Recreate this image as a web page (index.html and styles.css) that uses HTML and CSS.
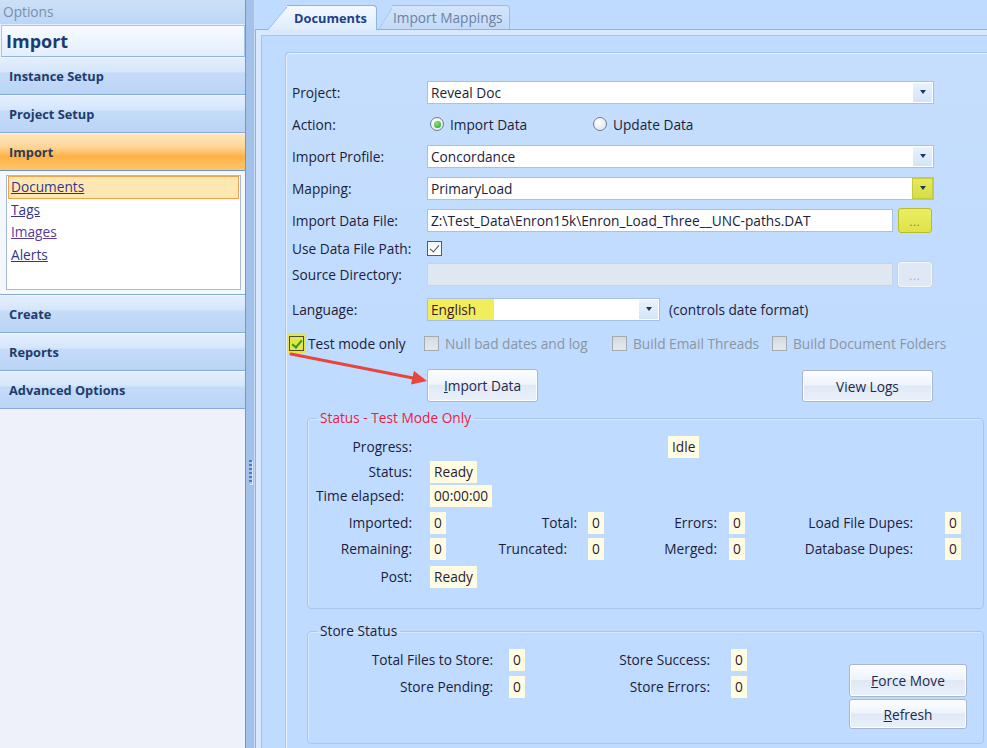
FILE: index.html
```html
<!DOCTYPE html>
<html>
<head>
<meta charset="utf-8">
<title>Options - Import</title>
<link rel="stylesheet" href="styles.css">
</head>
<body>
<div class="app">
  <aside class="sidebar">
    <div class="sb-caption">Options</div>
    <div class="sb-title">Import</div>
    <div class="nav-btn">Instance Setup</div>
    <div class="nav-btn">Project Setup</div>
    <div class="nav-btn active">Import</div>
    <div class="nav-content">
      <ul class="listbox">
        <li class="sel"><a href="#">Documents</a></li>
        <li><a href="#">Tags</a></li>
        <li><a href="#" class="visited">Images</a></li>
        <li><a href="#">Alerts</a></li>
      </ul>
    </div>
    <div class="nav-btn">Create</div>
    <div class="nav-btn">Reports</div>
    <div class="nav-btn">Advanced Options</div>
    <div class="sb-fill"></div>
  </aside>

  <div class="splitter"><span class="grip"></span></div>

  <main class="main">
    <div class="tabs">
      <div class="tab active"><span class="tab-text">Documents</span></div>
      <div class="tab"><span class="tab-text">Import Mappings</span></div>
    </div>
    <div class="tabpage">
      <div class="tabinner">
        <div class="formpanel">
          <div class="form">
            <div class="lbl">Project:</div>
            <div class="combo wide"><span class="cv">Reveal Doc</span><span class="dd"><i></i></span></div>

            <div class="lbl">Action:</div>
            <div class="radios">
              <span class="radio-item first"><span class="radio on"></span>Import Data</span>
              <span class="radio-item"><span class="radio"></span>Update Data</span>
            </div>

            <div class="lbl">Import Profile:</div>
            <div class="combo wide"><span class="cv">Concordance</span><span class="dd"><i></i></span></div>

            <div class="lbl">Mapping:</div>
            <div class="combo wide"><span class="cv">PrimaryLoad</span><span class="dd hl"><i></i></span></div>

            <div class="lbl">Import Data File:</div>
            <div class="filerow">
              <div class="textbox">Z:\Test_Data\Enron15k\Enron_Load_Three__UNC-paths.DAT</div>
              <span class="browse hl">...</span>
            </div>

            <div class="lbl">Use Data File Path:</div>
            <div class="ctl"><span class="check on"></span></div>

            <div class="lbl">Source Directory:</div>
            <div class="filerow">
              <div class="textbox disabled"></div>
              <span class="browse disabled">...</span>
            </div>

            <div class="lbl">Language:</div>
            <div class="langrow">
              <div class="combo lang"><span class="cv"><span class="mark">English</span></span><span class="dd"><i></i></span></div>
              <span class="hint">(controls date format)</span>
            </div>

            <div class="checks">
              <span class="chk-item"><span class="hlbox"><span class="check on green"></span></span><span class="chk-label">Test mode only</span></span>
              <span class="chk-item"><span class="check dis"></span><span class="chk-label dis">Null bad dates and log</span></span>
              <span class="chk-item"><span class="check dis"></span><span class="chk-label dis">Build Email Threads</span></span>
              <span class="chk-item"><span class="check dis"></span><span class="chk-label dis">Build Document Folders</span></span>
            </div>
          </div>

          <div class="actions">
            <button class="btn b-import"><u>I</u>mport Data</button>
            <button class="btn b-logs">View Logs</button>
          </div>

          <fieldset class="group status">
            <legend class="red">Status - Test Mode Only</legend>
            <div class="sgrid">
              <span class="l1">Progress:</span>
              <span class="val idle">Idle</span>

              <span class="l1">Status:</span>
              <span class="val v1">Ready</span>

              <span class="l1 left">Time elapsed:</span>
              <span class="val v1">00:00:00</span>

              <span class="l1">Imported:</span>
              <span class="val v1">0</span>
              <span class="l2">Total:</span>
              <span class="val v2">0</span>
              <span class="l3">Errors:</span>
              <span class="val v3">0</span>
              <span class="l4">Load File Dupes:</span>
              <span class="val v4">0</span>

              <span class="l1">Remaining:</span>
              <span class="val v1">0</span>
              <span class="l2 trunc">Truncated:</span>
              <span class="val v2">0</span>
              <span class="l3">Merged:</span>
              <span class="val v3">0</span>
              <span class="l4">Database Dupes:</span>
              <span class="val v4">0</span>

              <span class="l1">Post:</span>
              <span class="val v1">Ready</span>
            </div>
          </fieldset>

          <fieldset class="group store">
            <legend>Store Status</legend>
            <div class="store-body">
              <div class="stgrid">
                <span class="sl1">Total Files to Store:</span>
                <span class="val sv1">0</span>
                <span class="sl2">Store Success:</span>
                <span class="val sv2">0</span>
                <span class="sl1">Store Pending:</span>
                <span class="val sv1">0</span>
                <span class="sl2">Store Errors:</span>
                <span class="val sv2">0</span>
              </div>
              <div class="store-btns">
                <button class="btn b-force"><u>F</u>orce Move</button>
                <button class="btn b-refresh"><u>R</u>efresh</button>
              </div>
            </div>
          </fieldset>

          <svg class="arrow" width="200" height="360" viewBox="0 0 200 360">
            <line x1="4" y1="300" x2="126" y2="324" stroke="#e8453b" stroke-width="3" stroke-linecap="round"/>
            <polygon points="140,327 124,330.5 127,317" fill="#e8453b"/>
          </svg>
        </div>
      </div>
    </div>
  </main>
</div>
</body>
</html>
```

FILE: styles.css
```css
* { box-sizing: border-box; }

html, body {
  margin: 0;
  height: 100%;
}

body {
  font-family: "Open Sans", "Noto Sans", "Liberation Sans", sans-serif;
  font-size: 13.7px;
  color: #211d3a;
  background: #bfdbff;
  overflow: hidden;
}

.app {
  display: flex;
  width: 987px;
  height: 748px;
}

/* ---------- Sidebar ---------- */
.sidebar {
  width: 246px;
  flex: none;
  display: flex;
  flex-direction: column;
  background: #eef2fb;
  border-right: 1px solid #6f97cf;
}

.sb-caption {
  height: 25px;
  line-height: 24px;
  padding-left: 3px;
  color: #7a8fae;
  background: linear-gradient(#cde0f8, #bdd6f6);
  border-bottom: 1px solid #e4effd;
}

.sb-title {
  height: 32px;
  margin: 0 0 0 1px;
  padding-left: 4px;
  display: flex;
  align-items: center;
  font-weight: 700;
  font-size: 18px;
  color: #1b3b75;
  background: linear-gradient(#f8fbff, #e3eefd);
  border: 1px solid #a7c4ea;
  border-bottom-color: #8fb2e0;
}

.nav-btn {
  height: 38px;
  padding-left: 9px;
  display: flex;
  align-items: center;
  font-weight: 700;
  font-size: 12.8px;
  color: #1f3c6b;
  background: linear-gradient(#e4effd 0%, #d5e6fb 38%, #c5dcf9 42%, #bad4f5 100%);
  border-top: 1px solid #f2f8ff;
  border-bottom: 1px solid #86abdb;
}

.nav-btn.active {
  color: #2b3a57;
  background: linear-gradient(#ffe6c0 0%, #ffd597 36%, #ffb247 62%, #ffc46d 100%);
  border-top-color: #fff0d6;
  border-bottom-color: #6b97cf;
}

.nav-content {
  height: 124px;
  padding: 4px 4px 0 6px;
  background: #f4f8fd;
  border-bottom: 1px solid #86abdb;
}

.listbox {
  list-style: none;
  margin: 0;
  padding: 0 1px;
  height: 115px;
  background: #fff;
  border: 1px solid #a6bbd8;
}

.listbox li {
  height: 22.5px;
  line-height: 20px;
  padding-left: 2px;
  border: 1px solid transparent;
}

.listbox li.sel {
  background: #ffe7b1;
  border-color: #f1a24d;
}

.listbox a {
  color: #33358b;
  text-decoration: underline;
}

.listbox a.visited { color: #5b3b9a; }

.sb-fill {
  flex: 1;
  background: #eef1fa;
}

/* ---------- Splitter ---------- */
.splitter {
  width: 9px;
  flex: none;
  background: #a3c2ea;
  border-right: 1px solid #c6dbf6;
  display: flex;
  justify-content: center;
}

.grip {
  margin-top: 460px;
  width: 3px;
  height: 24px;
  background: repeating-linear-gradient(#4f7cc0 0 2px, transparent 2px 4px);
  box-shadow: 1px 1px 0 #dbe9fb;
}

/* ---------- Main ---------- */
.main {
  flex: 1;
  display: flex;
  flex-direction: column;
  overflow: hidden;
  background: #bfdbff;
}

.tabs {
  display: flex;
  height: 29px;
  padding: 5px 0 0 12px;
  position: relative;
  z-index: 2;
}

.tab {
  position: relative;
  height: 24px;
  display: flex;
  align-items: center;
}

.tab::before,
.tab::after {
  content: "";
  position: absolute;
  top: 0;
  bottom: 0;
  z-index: -1;
  background: linear-gradient(#d3e5fb, #c2d9f7);
  border: 1px solid #9bbce7;
  border-bottom: none;
}

.tab::before {
  left: 0;
  width: 26px;
  transform: skewX(-40deg);
  transform-origin: bottom left;
  border-right: none;
  border-top-left-radius: 4px;
}

.tab::after {
  left: 20px;
  right: 0;
  border-left: none;
  border-top-right-radius: 4px;
}

.tab.active {
  width: 110px;
  padding-left: 27px;
  font-weight: 700;
  font-size: 12.8px;
  color: #1d4088;
  height: 25px;
  margin-bottom: -1px;
}

.tab.active::before,
.tab.active::after {
  background: linear-gradient(#f5f9ff, #dfecfd);
  border-color: #8db2e3;
}

.tab:not(.active) {
  width: 132px;
  padding-left: 15px;
  color: #6c82a3;
  margin-left: 1px;
  z-index: -1;
}

.tab:not(.active)::before {
  width: 20px;
  transform: skewX(-33deg);
}

.tab:not(.active)::after { left: 14px; }

.tabpage {
  flex: 1;
  padding: 5px 0 0 5px;
  background: #d9e8fc;
  border-top: 1px solid #8db2e3;
  border-left: 1px solid #8db2e3;
}

.tabinner {
  height: 100%;
  padding: 17px 0 0 24px;
  background: #bfdbff;
  border-top: 1px solid #a5c4ec;
  border-left: 1px solid #a5c4ec;
}

.formpanel {
  position: relative;
  width: 720px;
  height: 760px;
  padding: 22px 0 0 5px;
  background: linear-gradient(#c6defc, #bfdbff 300px);
  border: 1px solid #e8f2ff;
  border-radius: 4px 0 0 0;
  box-shadow: -1px -1px 0 #a8c7ee;
}

/* ---------- Form ---------- */
.form {
  display: grid;
  grid-template-columns: 135px auto;
  grid-template-rows: 32px 32px 32px 32px 32px 24px 28px 42px 26px;
  align-items: center;
}

.lbl { white-space: nowrap; }

.combo {
  display: flex;
  height: 23px;
  background: #fff;
  border: 1px solid #a9c1e0;
}

.combo.wide { width: 507px; }
.combo.lang { width: 233px; }

.cv {
  flex: 1;
  line-height: 21px;
  padding-left: 3px;
  white-space: nowrap;
}

.mark {
  display: inline-block;
  width: 66px;
  margin-left: -3px;
  padding-left: 3px;
  height: 21px;
  background: #f2ee5b;
  color: #3b1630;
}

.dd {
  width: 19px;
  margin: 1px;
  background: linear-gradient(#eaf2fd, #d4e4f8);
  display: flex;
  align-items: center;
  justify-content: center;
}

.dd i {
  width: 0;
  height: 0;
  border-left: 3.5px solid transparent;
  border-right: 3.5px solid transparent;
  border-top: 4px solid #1c3766;
}

.dd.hl {
  margin: 0;
  width: 21px;
  background: linear-gradient(#e6ea5c, #d6dd46);
  border: 1px solid #c5cb3c;
}

.radios { display: flex; align-items: center; }

.radio-item {
  display: flex;
  align-items: center;
  gap: 6px;
  white-space: nowrap;
}

.radio-item.first {
  width: 163px;
  margin-left: 3px;
}

.radio {
  width: 14px;
  height: 14px;
  border-radius: 50%;
  border: 1px solid #6f7d92;
  background: radial-gradient(circle at 40% 35%, #ffffff, #d9dfe7);
  display: flex;
  align-items: center;
  justify-content: center;
}

.radio.on::after {
  content: "";
  width: 7px;
  height: 7px;
  border-radius: 50%;
  background: radial-gradient(circle at 40% 35%, #8fe37a, #1e9c1e);
}

.filerow {
  display: flex;
  align-items: center;
  gap: 5px;
}

.textbox {
  width: 466px;
  height: 23px;
  line-height: 21px;
  padding-left: 3px;
  background: #fff;
  border: 1px solid #a9c1e0;
  white-space: nowrap;
  overflow: hidden;
}

.textbox.disabled {
  background: #dfe7f1;
  border-color: #c5d3e5;
}

.browse {
  width: 34px;
  height: 25px;
  border-radius: 3px;
  display: flex;
  align-items: center;
  justify-content: center;
  padding-top: 4px;
  font-size: 10px;
  letter-spacing: 1px;
  color: #56657a;
}

.browse.hl {
  background: linear-gradient(#ecee62, #dfe347);
  border: 1px solid #b8bd2c;
}

.browse.disabled {
  background: #dfe8f4;
  border: 1px solid #f3f7fc;
  box-shadow: 0 0 0 1px #c4d3e6;
  color: #9aa7b8;
}

.ctl { display: flex; align-items: center; }

.check {
  width: 15px;
  height: 15px;
  border: 1px solid #555b63;
  background: linear-gradient(#f3f5f7, #ffffff);
  position: relative;
  flex: none;
}

.check.on::after {
  content: "";
  position: absolute;
  left: 4px;
  top: 1px;
  width: 4px;
  height: 8px;
  border-right: 1.6px solid #4a4f57;
  border-bottom: 1.6px solid #4a4f57;
  transform: rotate(40deg);
}

.check.green {
  background: transparent;
  border-color: #4b4d38;
}

.check.green::after {
  border-color: #2f9b22;
  border-width: 2px;
}

.check.dis {
  border-color: #a3a9b0;
  background: linear-gradient(#d6dadf, #e6e9ec);
}

.langrow {
  display: flex;
  align-items: center;
  gap: 9px;
}

.checks {
  grid-column: 1 / -1;
  margin-left: -5px;
  display: grid;
  grid-template-columns: 137px 188px 160px auto;
  align-items: center;
}

.chk-item {
  display: flex;
  align-items: center;
  gap: 6px;
  white-space: nowrap;
}

.hlbox {
  width: 19px;
  height: 20px;
  background: #e2e64b;
  display: flex;
  align-items: center;
  justify-content: center;
}

.chk-item:first-child { gap: 2px; }

.chk-label.dis { color: #8b95a3; }

/* ---------- Buttons ---------- */
.actions {
  display: flex;
  justify-content: space-between;
  align-items: flex-start;
  width: 506px;
  margin: 13px 0 0 135px;
}

.btn {
  font-family: inherit;
  font-size: 13.7px;
  color: #1f2a4a;
  border: 1px solid #a6b7cf;
  border-radius: 3px;
  background: linear-gradient(#fcfdff 0%, #eef4fc 46%, #dfe9f6 50%, #e9f0fa 100%);
  box-shadow: inset 0 0 0 1px #ffffff;
  padding: 0;
  cursor: default;
}

.b-import { width: 111px; height: 33px; }
.b-logs { width: 131px; height: 32px; margin-top: 1px; }

/* ---------- Groups ---------- */
.group {
  margin: 0 0 0 15px;
  width: 677px;
  padding: 0 0 0 8px;
  border: 1px solid #a8c6ec;
  border-radius: 4px;
  box-shadow: inset 1px 1px 0 #d9e8fd;
}

.group legend {
  margin-left: 1px;
  padding: 0 3px;
  line-height: 18px;
}

.red { color: #f0203c; }

.status {
  margin-top: 7px;
  height: 200px;
}

.sgrid {
  display: grid;
  padding-top: 9px;
  grid-template-columns: 96px 18px 70px 77px 11px 30px 99px 12px 40px 144px 32px auto;
  grid-template-rows: 25px 24px 27px 26px 28px 22px;
  align-items: start;
}

.sgrid > span {
  height: 22px;
  line-height: 22px;
  white-space: nowrap;
}

.l1 { grid-column: 1; justify-self: end; }
.l1.left { justify-self: start; }
.v1 { grid-column: 3; justify-self: start; }
.l2 { grid-column: 4; justify-self: end; }
.l2.trunc { margin-right: 10px; }
.v2 { grid-column: 6; justify-self: start; }
.l3 { grid-column: 7; justify-self: end; }
.v3 { grid-column: 9; justify-self: start; }
.l4 { grid-column: 10; justify-self: end; }
.v4 { grid-column: 12; justify-self: start; }
.idle { grid-column: 7; justify-self: start; margin-left: 50px; }

.val {
  background: #fffce2;
  padding: 0 4px;
  color: #2a1a33;
}

.store {
  margin-top: 13px;
  height: 122px;
}

.store-body {
  display: flex;
  align-items: flex-start;
  padding-top: 9px;
}

.stgrid {
  display: grid;
  grid-template-columns: 177px 16px 31px 170px 21px auto;
  grid-template-rows: 22px 22px;
  row-gap: 5px;
  align-items: start;
}

.stgrid > span {
  height: 22px;
  line-height: 22px;
  white-space: nowrap;
}

.sl1 { grid-column: 1; justify-self: end; }
.sv1 { grid-column: 3; justify-self: start; }
.sl2 { grid-column: 4; justify-self: end; }
.sv2 { grid-column: 6; justify-self: start; }

.store-btns {
  margin: 15px 16px 0 auto;
  display: flex;
  flex-direction: column;
  gap: 2px;
}

.b-force { width: 118px; height: 33px; }
.b-refresh { width: 118px; height: 30px; }

/* ---------- Annotation ---------- */
.arrow {
  position: absolute;
  left: 0;
  top: 0;
  pointer-events: none;
  overflow: visible;
}
```
